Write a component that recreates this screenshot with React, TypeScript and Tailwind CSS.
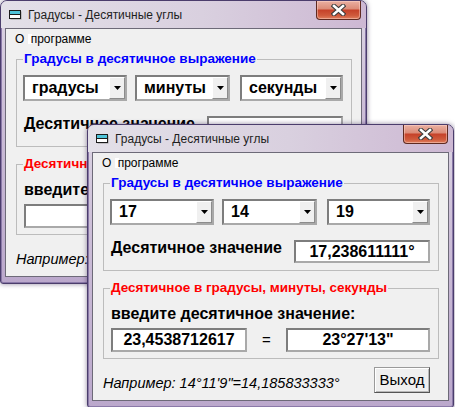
import React from 'react';

type WinData = {
  deg: string;
  min: string;
  sec: string;
  dec: string;
  input: string;
  out: string;
};

const WinIcon = () => (
  <svg width="13" height="10" viewBox="0 0 13 10">
    <rect x="1.5" y="1.5" width="11" height="8" fill="#9a9a9a" />
    <rect x="0.5" y="0.5" width="11" height="8" fill="#fff" stroke="#1b1b1b" />
    <rect x="1" y="1" width="10" height="3" fill="#4fc3d9" />
    <line x1="1" y1="4.5" x2="11" y2="4.5" stroke="#1b1b1b" />
  </svg>
);

const CloseButton = () => (
  <div className="absolute top-0 right-[5px] w-[45px] h-[19px] rounded-b-[4px] border border-t-0 border-[#5e2a20] bg-[linear-gradient(180deg,#eab0a2_0%,#dc8d79_42%,#c6432a_52%,#cf5a3c_80%,#e0805e_100%)] shadow-[inset_0_0_0_1px_rgba(255,220,210,0.45)] flex items-center justify-center">
    <svg width="15" height="12" viewBox="0 0 15 12">
      <path d="M3 2l9 8M12 2l-9 8" stroke="#3b3b3b" strokeWidth="4.6" strokeLinecap="square" />
      <path d="M3 2l9 8M12 2l-9 8" stroke="#fff" strokeWidth="2.6" strokeLinecap="square" />
    </svg>
  </div>
);

const Combo = ({ value, w }: { value: string; w: string }) => (
  <div className={`${w} h-[26px] flex bg-white border-2 border-[#a9a9a9] border-t-[#7d7d7d] border-l-[#7d7d7d]`}>
    <span className="flex-1 pl-[7px] text-[16px] font-bold leading-[22px] text-black">{value}</span>
    <span className="w-[16px] flex items-center justify-center bg-[#f0f0f0] border border-[#ffffff] border-r-[#8c8c8c] border-b-[#8c8c8c]">
      <svg width="7" height="4" viewBox="0 0 7 4">
        <path d="M0 0h7L3.5 4z" fill="#000" />
      </svg>
    </span>
  </div>
);

const Field = ({ value, w, h }: { value: string; w: string; h: string }) => (
  <div className={`${w} ${h} flex items-center justify-center bg-white border-2 border-[#a9a9a9] border-t-[#7d7d7d] border-l-[#7d7d7d] text-[16px] font-bold leading-[18px] text-black`}>
    {value}
  </div>
);

const Window = ({ d }: { d: WinData }) => (
  <div className="relative w-[367px] h-[284px] flex flex-col rounded-t-[7px] rounded-b-[3px] border border-[#4b3d6c] bg-[linear-gradient(180deg,#ddd6e4_0%,#cdbfd8_35%,#bba8cc_100%)] shadow-[0_0_5px_rgba(40,20,70,0.5),inset_1px_0_0_#8a79a8,inset_-1px_0_0_#8a79a8,inset_0_-1px_0_#8a79a8] font-['Liberation_Sans',Arial,sans-serif]">
    <div className="h-[27px] flex items-center pl-[8px] rounded-t-[6px] bg-[linear-gradient(90deg,#e3e0e8_0%,#d9d0df_55%,#cdb8d3_100%)]">
      <WinIcon />
      <span className="ml-[6px] text-[12px] text-[#1e1e1e]">Градусы - Десятичные углы</span>
    </div>
    <CloseButton />
    <div className="flex-1 px-[4px] pb-[6px]">
      <div className="h-full flex flex-col border border-[#6d6a78] bg-[#f0f0f0]">
        <div className="h-[22px] pl-[9px] pt-[3px] text-[12px] leading-[14px] text-black">
          О <span className="inline-block w-[4px] h-[10px] bg-white align-[-1px] -mr-[1px]"></span>программе
        </div>

        <fieldset className="ml-[10px] mr-[9px] border border-[#bcbcbc] pl-[6px] pr-[8px] pt-[8px] pb-[7px]">
          <legend className="px-[1px] text-[13.5px] font-bold leading-[16px] text-[#0000ff]">
            Градусы в десятичное выражение
          </legend>
          <div className="flex">
            <Combo value={d.deg} w="w-[104px]" />
            <div className="ml-[8px]">
              <Combo value={d.min} w="w-[95px]" />
            </div>
            <div className="ml-[10px]">
              <Combo value={d.sec} w="w-[103px]" />
            </div>
          </div>
          <div className="flex items-start mt-[15px]">
            <span className="ml-[1px] -mt-[1px] text-[16px] font-bold leading-[18px] text-black">
              Десятичное значение
            </span>
            <div className="ml-auto">
              <Field value={d.dec} w="w-[136px]" h="h-[23px]" />
            </div>
          </div>
        </fieldset>

        <fieldset className="mt-[9px] ml-[10px] mr-[9px] border border-[#bcbcbc] pl-[7px] pr-[8px] pt-[9px] pb-[6px]">
          <legend className="-ml-[1px] px-[1px] text-[13.5px] font-bold leading-[16px] text-[#ff0000]">
            Десятичное в градусы, минуты, секунды
          </legend>
          <div className="text-[16px] font-bold leading-[18px] text-black">введите десятичное значение:</div>
          <div className="flex items-center mt-[5px]">
            <Field value={d.input} w="w-[136px]" h="h-[24px]" />
            <span className="flex-1 text-center text-[15px] text-black">=</span>
            <Field value={d.out} w="w-[144px]" h="h-[24px]" />
          </div>
        </fieldset>

        <div className="flex items-start justify-between pl-[10px] pr-[18px]">
          <span className="pt-[16px] text-[14.5px] italic leading-[16px] text-black">
            Например: 14°11'9"=14,185833333°
          </span>
          <button className="mt-[8px] w-[56px] h-[26px] bg-[#efefef] border border-[#9a9a9a] border-r-[#555] border-b-[#555] shadow-[inset_1px_1px_0_#fff,inset_-1px_-1px_0_#b8b8b8] text-[15px] leading-[18px] text-black">
            Выход
          </button>
        </div>
      </div>
    </div>
  </div>
);

export default function App() {
  const back: WinData = { deg: 'градусы', min: 'минуты', sec: 'секунды', dec: '', input: '', out: '' };
  const front: WinData = {
    deg: '17',
    min: '14',
    sec: '19',
    dec: '17,238611111°',
    input: '23,4538712617',
    out: `23°27'13"`,
  };
  return (
    <div className="relative w-[455px] h-[407px] overflow-hidden bg-white">
      <div className="absolute left-0 top-0">
        <Window d={back} />
      </div>
      <div className="absolute left-[87px] top-[124px]">
        <Window d={front} />
      </div>
    </div>
  );
}
